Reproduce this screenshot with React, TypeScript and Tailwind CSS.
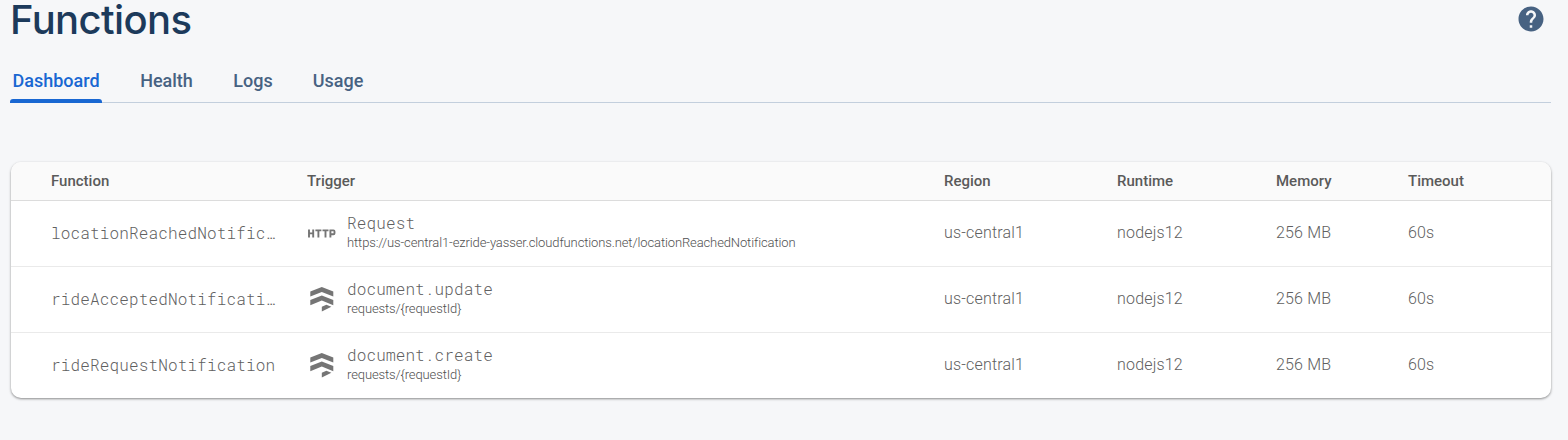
const tabs = [
  { label: 'Dashboard', style: 'w-[92px] text-[#1967d2]' },
  { label: 'Health', style: 'ml-[37px] w-[55px] text-[#476282]' },
  { label: 'Logs', style: 'ml-[38px] w-[42px] text-[#476282]' },
  { label: 'Usage', style: 'ml-[38px] w-[52px] text-[#476282]' },
];

const rows = [
  {
    name: 'locationReachedNotification',
    kind: 'http',
    event: 'Request',
    detail: 'https://us-central1-ezride-yasser.cloudfunctions.net/locationReachedNotification',
  },
  { name: 'rideAcceptedNotification', kind: 'firestore', event: 'document.update', detail: 'requests/{requestId}' },
  { name: 'rideRequestNotification', kind: 'firestore', event: 'document.create', detail: 'requests/{requestId}' },
];

const columns = 'grid grid-cols-[256px_637px_173px_159px_132px_1fr] pl-10';
const mono = "font-['Roboto_Mono','Liberation_Mono',monospace] text-[16px]";

function HelpIcon() {
  return (
    <svg className="h-[30px] w-[30px]" viewBox="0 0 24 24" fill="#476282">
      <path d="M12 2C6.48 2 2 6.48 2 12s4.48 10 10 10 10-4.48 10-10S17.52 2 12 2zm1 17h-2v-2h2v2zm2.07-7.75-.9.92C13.45 12.9 13 13.5 13 15h-2v-.5c0-1.1.45-2.1 1.17-2.83l1.24-1.26c.37-.36.59-.86.59-1.41 0-1.1-.9-2-2-2s-2 .9-2 2H8c0-2.21 1.79-4 4-4s4 1.79 4 4c0 .88-.36 1.68-.93 2.25z" />
    </svg>
  );
}

function FirestoreIcon() {
  return (
    <svg className="ml-[3px] h-[25px] w-6" viewBox="0 0 24 25" fill="#757575">
      <path d="M.3 4.4 11.8 0l11.5 4.4v5.1L11.8 5.1.3 9.5z" />
      <path d="M.3 13 11.8 8.4 23.3 13v5.2l-11.5-4.6L.3 18.2z" />
      <path d="M11.8 19.8 16.4 17.7l5 2.1-9.6 4.6z" />
    </svg>
  );
}

function HttpIcon() {
  return (
    <svg className="ml-px h-[9px] w-[28px]" viewBox="0 0 28 9" fill="none" stroke="#757575" strokeWidth="1.9">
      <path d="M1 .5v8M5.2 .5v8M1 4.4h4.2M7.4 1.4h6M10.4 1.4v7.1M14.5 1.4h6M17.5 1.4v7.1M22.4 8.5V1.4h3.1a1 1 0 0 1 1 1v1.8a1 1 0 0 1-1 1h-3.1" />
    </svg>
  );
}

export default function App() {
  return (
    <div className="h-[440px] overflow-hidden bg-[#f6f7f9] pl-[10px] pr-[17px] font-['Roboto',sans-serif]">
      <header className="flex h-[60px] justify-between pr-[5px]">
        <h1 className="font-['Google_Sans','Inter',sans-serif] text-[40px] font-[450] leading-[39px] tracking-[-0.6px] text-[#1c3a5b]">
          Functions
        </h1>
        <div className="pt-1">
          <HelpIcon />
        </div>
      </header>
      <nav className="flex h-[43px] border-b border-[#c3cfdd]">
        {tabs.map((tab, i) => (
          <div key={tab.label} className={`flex h-[43px] flex-col items-center justify-between ${tab.style}`}>
            <span className="pt-[9px] text-[18px] font-medium leading-6">{tab.label}</span>
            {i === 0 && <span className="h-1 w-full rounded-t-[3px] bg-[#1967d2]" />}
          </div>
        ))}
      </nav>
      <section className="ml-px mt-[59px] h-[236px] overflow-hidden rounded-[10px] bg-white shadow-[0_1px_3px_rgba(0,0,0,0.28),0_1px_2px_rgba(0,0,0,0.2)]">
        <div className={`${columns} h-[39px] items-center border-b border-[#dcdcdc] bg-[#fafafa] text-[15px] font-medium text-[#5a5a5a]`}>
          <span>Function</span>
          <span>Trigger</span>
          <span>Region</span>
          <span>Runtime</span>
          <span>Memory</span>
          <span>Timeout</span>
        </div>
        {rows.map((row) => (
          <div
            key={row.name}
            className={`${columns} h-[66px] items-center border-b border-[#eaeaea] pb-[2px] text-[16px] font-light tracking-[0.18px] text-[#606060] last:border-transparent`}
          >
            <span className={`${mono} w-[230px] truncate tracking-[0.15px]`}>{row.name}</span>
            <div className="flex items-center">
              <div className="w-10 pt-[2px]">{row.kind === 'http' ? <HttpIcon /> : <FirestoreIcon />}</div>
              <div className="-mt-[2px] flex flex-col">
                <span className={`${mono} leading-[22px] tracking-[0.13px]`}>{row.event}</span>
                <span className="pt-px text-[13px] leading-4 tracking-[-0.12px] text-[#505050]">{row.detail}</span>
              </div>
            </div>
            <span>us-central1</span>
            <span>nodejs12</span>
            <span>256 MB</span>
            <span>60s</span>
          </div>
        ))}
      </section>
    </div>
  );
}
